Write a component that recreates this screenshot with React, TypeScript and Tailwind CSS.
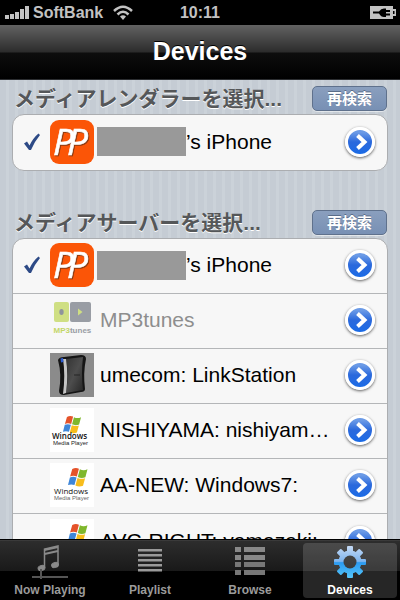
import React from "react";

type IconName = "pp" | "mp3tunes" | "linkstation" | "wmp" | "windows7";

interface Device {
  name: string;
  icon: IconName;
  checked?: boolean;
  hiddenOwner?: boolean;
  disabled?: boolean;
}

const renderers: Device[] = [
  { name: "’s iPhone", icon: "pp", checked: true, hiddenOwner: true },
];

const servers: Device[] = [
  { name: "’s iPhone", icon: "pp", checked: true, hiddenOwner: true },
  { name: "MP3tunes", icon: "mp3tunes", disabled: true },
  { name: "umecom: LinkStation", icon: "linkstation" },
  { name: "NISHIYAMA: nishiyama-pc", icon: "wmp" },
  { name: "AA-NEW: Windows7:", icon: "windows7" },
  { name: "AVC-RIGHT: yamazaki:", icon: "windows7" },
];

const WindowsFlag = () => (
  <>
    <path d="M4.500 1 Q8 -1 11.500 0.700 L9.300 9 Q5.500 7.500 2.200 9Z" fill="#e5532a" />
    <path d="M12.500 1.300 Q16.500 3.200 20.500 1.300 L18.300 9.700 Q14.300 11.200 10.300 9.500Z" fill="#7fb72c" />
    <path d="M2 10 Q5.500 8.500 9 10 L6.800 18 Q3.300 16.500 0 18Z" fill="#3f86d8" />
    <path d="M10 10.500 Q14 12.200 18 10.700 L15.800 18.700 Q11.800 20.500 7.800 18.500Z" fill="#f8bd1c" />
  </>
);

const DeviceIcon: React.FC<{ icon: IconName }> = ({ icon }) => {
  switch (icon) {
    case "pp":
      return (
        <svg viewBox="0 0 44 44" className="size-11 shrink-0 overflow-visible" aria-hidden="true">
          <rect width="44" height="44" rx="9" fill="#fb5507" />
          <text
            x="3 17"
            y="35"
            fontFamily="'Open Sans', sans-serif"
            fontStyle="italic"
            fontSize="37"
            fill="#fff"
            stroke="#fff"
            strokeWidth="0.600"
            className="drop-shadow-[1px_1px_0_#8a3a12]"
          >
            PP
          </text>
        </svg>
      );
    case "mp3tunes":
      return (
        <svg viewBox="0 0 44 44" className="size-11 shrink-0 overflow-visible" aria-hidden="true">
          <rect x="4" y="4" width="15" height="20" rx="2" fill="#cfdf83" />
          <rect x="20" y="4" width="21" height="20" rx="2" fill="#999da4" />
          <ellipse cx="11.500" cy="14" rx="2.200" ry="3" fill="#8f949c" />
          <path d="M28 10.500 L32.500 14 L28 17.500Z" fill="#cfdf83" />
          <text x="3.500" y="35" fontFamily="'Liberation Sans', sans-serif" fontWeight="700" fontSize="8" fill="#c3d668">
            MP3<tspan fill="#999da4">tunes</tspan>
          </text>
        </svg>
      );
    case "linkstation":
      return (
        <svg viewBox="0 0 44 44" className="size-11 shrink-0" aria-hidden="true">
          <defs>
            <linearGradient id="drive" x1="0" y1="0" x2="1" y2="1">
              <stop offset="0" stopColor="#333" />
              <stop offset="0.500" stopColor="#4d4d4d" />
              <stop offset="1" stopColor="#262626" />
            </linearGradient>
          </defs>
          <rect width="44" height="44" fill="#8b8b8b" />
          <path d="M8 7 Q9 4 14 4 L31 2 Q36 2 36 6 Q33 20 35 36 Q35 39 31 39 L14 42 Q9 42 9 38 Q12 22 8 7Z" fill="#151515" />
          <path d="M16 6 L33 4 Q31 20 33 37 L16 40 Q19 22 16 6Z" fill="url(#drive)" />
          <path d="M13 6 L16 6 Q18.500 22 16 40 L13 41 Q15.500 22 13 6Z" fill="#c4c4c4" />
          <path d="M10.500 5.500 L13 5 L13.500 9 L11 9.500Z" fill="#2c5bd0" />
          <path d="M24 22 H30" stroke="#252525" />
        </svg>
      );
    case "wmp":
      return (
        <svg viewBox="0 0 44 44" className="size-11 shrink-0 overflow-visible" aria-hidden="true">
          <rect width="44" height="44" fill="#fff" />
          <g transform="translate(13 8) scale(0.88)">
            <WindowsFlag />
          </g>
          <text x="2" y="31" fontFamily="'Open Sans', sans-serif" fontWeight="600" fontSize="8" fill="#111">
            Windows
          </text>
          <text x="3" y="37" fontFamily="'Liberation Sans', sans-serif" fontSize="6" fill="#222">
            Media Player
          </text>
        </svg>
      );
    default:
      return (
        <svg viewBox="0 0 44 44" className="size-11 shrink-0 overflow-visible" aria-hidden="true">
          <rect width="44" height="44" fill="#fff" />
          <g transform="translate(18 5) scale(0.95)">
            <WindowsFlag />
          </g>
          <text x="4" y="31" fontFamily="'Open Sans', sans-serif" fontSize="8" fill="#111">
            Windows
          </text>
          <text x="4" y="37" fontFamily="'Liberation Sans', sans-serif" fontSize="6" fill="#666">
            Media Player
          </text>
        </svg>
      );
  }
};

const DisclosureButton: React.FC<{ label: string }> = ({ label }) => (
  <button
    type="button"
    aria-label={label}
    className="flex size-[30px] shrink-0 items-center justify-center rounded-full border-[3px] border-white bg-linear-to-b from-[#6b9ae6] from-10% via-[#2b69dc] via-50% to-[#1a6be6] shadow-[0_1px_3px_rgba(0,0,0,0.65)]"
  >
    <svg viewBox="0 0 24 24" className="size-6" fill="none" stroke="#fff" strokeWidth="4" aria-hidden="true">
      <path d="M9.500 5.500 L16.500 12 L9.500 18.500" />
    </svg>
  </button>
);

const DeviceRow: React.FC<{ device: Device }> = ({ device }) => (
  <li className="flex h-[55px] items-center pr-3 pb-0.5">
    <span className="flex w-[37px] shrink-0 justify-center">
      {device.checked && (
        <svg viewBox="0 0 18 18" className="size-[18px]" aria-label="selected">
          <path d="M1 10.500 L4 8.500 L6.500 12.500 Q10 5 15.500 0.500 L17 2 Q11.500 8.500 8 17 L6 17Z" fill="#2d4a86" />
        </svg>
      )}
    </span>
    <DeviceIcon icon={device.icon} />
    {device.hiddenOwner && <span className="ml-[3px] h-[29px] w-[89px] shrink-0 bg-[#999]" />}
    <span
      className={`min-w-0 flex-1 truncate pr-3 text-[21px] leading-7 ${
        device.hiddenOwner ? "" : "ml-1.5"
      } ${device.disabled ? "text-[#8e8e8e]" : "text-black"}`}
    >
      {device.name}
    </span>
    <DisclosureButton label={device.name} />
  </li>
);

const DeviceSection: React.FC<{ title: string; devices: Device[] }> = ({ title, devices }) => (
  <section>
    <div className="flex h-[34px] items-center justify-between pt-[3px] pr-px pl-0.5">
      <h2 className="text-[21px] leading-7 font-bold text-[#555759] [text-shadow:0_1px_0_#fff]">{title}</h2>
      <button
        type="button"
        className="h-[25px] w-[75px] rounded-[5px] border border-[#5f718c] bg-linear-to-b from-[#8a9fbe] to-[#7890b4] text-[15px] leading-5 font-bold text-white shadow-[0_1px_0_rgba(255,255,255,0.5)] [text-shadow:0_-1px_0_#5a6c88]"
      >
        再検索
      </button>
    </div>
    <ul className="divide-y divide-[#b4b6b8] rounded-xl border border-[#abadb0] bg-[#f7f7f7]">
      {devices.map((device, i) => (
        <DeviceRow key={i} device={device} />
      ))}
    </ul>
  </section>
);

const StatusBar = () => (
  <div className="grid h-[25px] shrink-0 grid-cols-3 items-center bg-black px-1 text-[16px] leading-5 font-bold text-[#c2c2c2]">
    <div className="flex items-center gap-1">
      <svg viewBox="0 0 25 13" className="h-[13px] w-[25px] shrink-0" fill="#c2c2c2" aria-hidden="true">
        <rect x="1" y="9" width="4" height="4" />
        <rect x="6" y="8" width="4" height="5" />
        <rect x="11" y="6" width="4" height="7" />
        <rect x="16" y="3" width="4" height="10" />
        <rect x="21" y="0" width="4" height="13" />
      </svg>
      <span>SoftBank</span>
      <svg viewBox="0 0 20 15" className="ml-1.5 h-[15px] w-5 shrink-0" fill="none" stroke="#c2c2c2" strokeWidth="2.500" aria-hidden="true">
        <path d="M1 6 Q10 -2.500 19 6" />
        <path d="M4.500 9.500 Q10 4 15.500 9.500" />
        <path d="M7 11.500 Q10 9 13 11.500 L10 15Z" fill="#c2c2c2" stroke="none" />
      </svg>
    </div>
    <span className="text-center">10:11</span>
    <svg viewBox="0 0 26 13" className="h-[13px] w-[26px] justify-self-end" aria-label="charging">
      <path d="M0 0 H23 V3 H26 V10 H23 V13 H0Z" fill="#c2c2c2" />
      <path d="M3 5.500 H9 Q11 2.500 14 2.500 H16 V4 H20 V6 H16 V7.500 H20 V9.500 H16 V11 H14 Q11 11 9 7.500 H3Z" fill="#000" />
      <path d="M23 5 H24.500 V8 H23Z" fill="#000" />
    </svg>
  </div>
);

const NowPlayingIcon = () => (
  <svg viewBox="0 0 36 34" className="h-[34px] w-9" aria-hidden="true">
    <g fill="#8a8a8a" stroke="#8a8a8a">
      <path d="M12.500 23 V4 L26 1 V20" fill="none" strokeWidth="1.500" />
      <path d="M12.500 5 L26 2 M12.500 9 L26 6" strokeWidth="2" />
      <ellipse cx="9.500" cy="23" rx="3.500" ry="2.500" transform="rotate(-20 9.500 23)" />
      <ellipse cx="23" cy="20" rx="3.500" ry="2.500" transform="rotate(-20 23 20)" />
    </g>
    <path d="M0 32 H36 M9 24 V34" stroke="#555" strokeWidth="2" />
  </svg>
);

const PlaylistIcon = () => (
  <svg viewBox="0 0 24 34" className="h-[34px] w-6" fill="#9a9a9a" aria-hidden="true">
    <path d="M0 4 H24 V6.500 H0Z M0 9 H24 V11.500 H0Z M0 14 H24 V16.500 H0Z M0 19 H24 V21.500 H0Z M0 24 H24 V26.500 H0Z" />
  </svg>
);

const BrowseIcon = () => (
  <svg viewBox="0 0 30 34" className="h-[34px] w-[30px]" aria-hidden="true">
    <g fill="#888">
      <path d="M0 2 H6 V7 H0Z M9 2 H30 V7 H9Z" />
      <path d="M0 10 H6 V15 H0Z M9 10 H30 V15 H9Z" />
      <path d="M0 17 H6 V22 H0Z M9 17 H30 V22 H9Z" fill="#777" />
      <path d="M0 25 H6 V30 H0Z M9 25 H30 V30 H9Z" fill="#777" />
    </g>
  </svg>
);

const GearIcon = () => (
  <svg viewBox="-17 -17 34 34" className="size-[34px]" aria-hidden="true">
    <defs>
      <linearGradient id="gear" gradientUnits="userSpaceOnUse" x1="0" y1="-16" x2="0" y2="16">
        <stop offset="0" stopColor="#c5daf5" />
        <stop offset="0.480" stopColor="#7db4ee" />
        <stop offset="0.520" stopColor="#2b9af0" />
        <stop offset="1" stopColor="#55c6fa" />
      </linearGradient>
      <mask id="gear-shape" maskUnits="userSpaceOnUse" x="-17" y="-17" width="34" height="34">
        <circle r="11.500" fill="#fff" />
        <g fill="#fff">
          {[0, 45, 90, 135].map((angle) => (
            <rect key={angle} x="-3" y="-16" width="6" height="32" rx="1" transform={`rotate(${angle})`} />
          ))}
        </g>
        <circle r="6.500" fill="#000" />
      </mask>
    </defs>
    <rect x="-17" y="-17" width="34" height="34" fill="url(#gear)" mask="url(#gear-shape)" />
  </svg>
);

const tabs = [
  { label: "Now Playing", Icon: NowPlayingIcon },
  { label: "Playlist", Icon: PlaylistIcon },
  { label: "Browse", Icon: BrowseIcon },
  { label: "Devices", Icon: GearIcon, active: true },
];

const TabBar = () => (
  <nav className="grid h-[61px] shrink-0 grid-cols-4 border-t border-black bg-[linear-gradient(#3a3a3a_0_1px,#2d2d2d_1px,#191919_31px,#000_31px)]">
    {tabs.map(({ label, Icon, active }) => (
      <button
        key={label}
        type="button"
        aria-current={active ? "page" : undefined}
        className={`m-[3px] flex flex-col items-center justify-start rounded text-[12px] leading-4 font-bold whitespace-nowrap ${
          active ? "bg-white/15 text-white" : "text-[#9b9b9b]"
        }`}
      >
        <span className="flex h-[39px] items-start pt-0.5">
          <Icon />
        </span>
        {label}
      </button>
    ))}
  </nav>
);

export default function App() {
  return (
    <div className="flex h-screen flex-col overflow-hidden bg-black font-['Liberation_Sans','Noto_Sans_CJK_JP',sans-serif]">
      <StatusBar />
      <header className="flex h-[55px] shrink-0 items-center justify-center border-b border-[#2b2d30] bg-[linear-gradient(#626262,#2c2c2c_27px,#0d0d0d_28px,#000)] pb-0.5">
        <h1 className="text-[25px] leading-8 font-bold text-white [text-shadow:0_-1px_0_#000]">Devices</h1>
      </header>
      <main className="flex min-h-0 flex-1 flex-col gap-[33px] overflow-hidden bg-[repeating-linear-gradient(90deg,#c5ccd4_0_6px,#cbd2d9_6px_9px)] px-3">
        <DeviceSection title="メディアレンダラーを選択..." devices={renderers} />
        <DeviceSection title="メディアサーバーを選択..." devices={servers} />
      </main>
      <TabBar />
    </div>
  );
}
